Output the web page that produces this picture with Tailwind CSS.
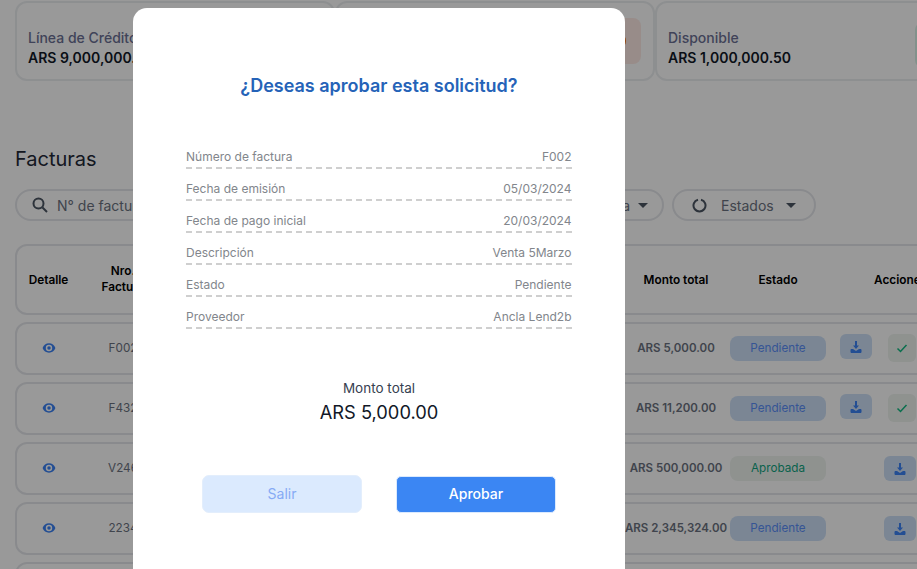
<!DOCTYPE html>
<html lang="es">
<head>
  <meta charset="UTF-8" />
  <title>Facturas</title>
  <script src="https://cdn.jsdelivr.net/npm/@tailwindcss/browser@4"></script>
</head>
<body class="h-[569px] w-[917px] overflow-hidden bg-white font-['Inter',sans-serif] text-[#1f2937]">
  <!-- Fondo: resumen y tabla -->
  <main class="w-[1000px] pl-[15px]">
    <section class="flex pt-px">
      <div class="h-[80px] w-[320px] shrink-0 rounded-[12px] border-2 border-[#eceef1] pl-[11px] pt-[25px]">
        <p class="text-[14px] font-medium leading-[20px] text-[#6b7094]">Línea de Crédito</p>
        <p class="text-[14px] font-semibold leading-[20px] text-[#111827]">ARS 9,000,000.50</p>
      </div>
      <div class="flex h-[80px] w-[320px] shrink-0 items-center justify-end rounded-[12px] border-2 border-[#eceef1] pr-[12px]">
        <div class="flex h-[46px] w-[46px] items-center justify-center rounded-[8px] bg-[#fdeae5]">
          <span class="h-[16px] w-[16px] rounded-full bg-[#f97316]"></span>
        </div>
      </div>
      <div class="flex h-[80px] w-[320px] shrink-0 justify-between rounded-[12px] border-2 border-[#eceef1] pl-[11px] pr-[12px] pt-[25px]">
        <div>
          <p class="text-[14px] font-medium leading-[20px] text-[#6b7094]">Disponible</p>
          <p class="text-[14px] font-semibold leading-[20px] text-[#111827]">ARS 1,000,000.50</p>
        </div>
        <div class="-mt-[6px] h-[46px] w-[46px] rounded-[8px] bg-[#d9f2e8]"></div>
      </div>
    </section>

    <h2 class="mt-[66px] text-[20px] leading-[24px] text-[#1f2937]">Facturas</h2>

    <section class="mt-[18px] flex items-center">
      <div class="flex h-[32px] w-[400px] items-center gap-[9px] rounded-full border-2 border-[#e5e7eb] pl-[15px]">
        <svg class="h-[16px] w-[16px]" viewBox="0 0 16 16" fill="none" stroke="#4b5563" stroke-width="2"><circle cx="6.5" cy="6.5" r="5"/><path d="M10.500 10.500 15 15"/></svg>
        <span class="text-[14px] text-[#6b7280]">N° de factura</span>
      </div>
      <div class="ml-[151px] flex h-[32px] w-[98px] items-center justify-end gap-[8px] rounded-full border-2 border-[#e5e7eb] pr-[14px]">
        <span class="text-[14px] text-[#6b7280]">Fecha</span>
        <span class="h-0 w-0 border-x-[5px] border-t-[5px] border-x-transparent border-t-[#4b5563]"></span>
      </div>
      <div class="ml-[8px] flex h-[32px] w-[144px] items-center rounded-full border-2 border-[#e5e7eb] pl-[18px]">
        <svg class="h-[15px] w-[15px]" viewBox="0 0 15 15" fill="none" stroke="#4b5563" stroke-width="2"><path d="M9 1.700A6 6 0 1 1 6 1.700"/></svg>
        <span class="ml-[14px] text-[14px] text-[#6b7280]">Estados</span>
        <span class="ml-[12px] h-0 w-0 border-x-[5px] border-t-[5px] border-x-transparent border-t-[#4b5563]"></span>
      </div>
    </section>

    <section class="mt-[23px] flex flex-col gap-[7px]">
      <div class="grid h-[71px] grid-cols-[63px_86px_458px_104px_100px_160px] rounded-[12px] border-2 border-[#e5e7eb] pt-[24px] text-center text-[11.8px] font-semibold leading-[16px] text-black">
        <span class="mt-[2px]">Detalle</span>
        <span class="-mt-[7px]">Nro.<br />Factura</span>
        <span></span>
        <span class="mt-[2px]">Monto total</span>
        <span class="mt-[2px]">Estado</span>
        <span class="mt-[2px] pl-[46px] text-left">Acciones</span>
      </div>

      <div class="grid h-[53px] grid-cols-[63px_86px_458px_104px_100px_160px] items-center rounded-[12px] border-2 border-[#e5e7eb] text-center text-[11.7px] text-[#6b7280]">
        <svg class="mx-auto -mt-[2px] h-[14px] w-[14px]" viewBox="0 0 24 24" fill="#3b82f6"><path d="M12 4C7 4 2.700 7.100 1 12c1.700 4.900 6 8 11 8s9.300-3.100 11-8c-1.700-4.900-6-8-11-8Zm0 13.500a5.500 5.500 0 1 1 0-11 5.500 5.500 0 0 1 0 11Zm0-8.500a3 3 0 1 0 0 6 3 3 0 0 0 0-6Z"/></svg>
        <span>F002</span>
        <span></span>
        <span class="whitespace-nowrap text-[11.5px] font-semibold">ARS 5,000.00</span>
        <span class="mx-auto flex h-[25px] w-[96px] items-center justify-center rounded-[8px] bg-[#cde0f7] text-[#5b8ef8]">Pendiente</span>
        <div class="flex h-[29px] items-start gap-[16px] pl-[12px]">
          <span class="flex h-[25px] w-[32px] items-center justify-center rounded-[6px] bg-[#cde0f7]"><svg class="h-[12px] w-[12px]" viewBox="0 0 12 12" fill="#3b82f6"><path d="M5 0h2v4.500h2L6 8 3 4.500h2Z"/><path d="M.5 9c0-.5.5-1 1-1H3l3 2 3-2h1.500c.5 0 1 .5 1 1v2c0 .5-.5 1-1 1h-9c-.5 0-1-.5-1-1Z"/></svg></span>
          <span class="flex h-[28px] w-[28px] items-center justify-center rounded-[6px] bg-[#eef3ef]"><svg class="h-[12px] w-[12px]" viewBox="0 0 12 12" fill="none" stroke="#10b981" stroke-width="1.500"><path d="M1.500 6.500 4.500 9.500 10.500 3"/></svg></span>
        </div>
      </div>

      <div class="grid h-[53px] grid-cols-[63px_86px_458px_104px_100px_160px] items-center rounded-[12px] border-2 border-[#e5e7eb] text-center text-[11.7px] text-[#6b7280]">
        <svg class="mx-auto -mt-[2px] h-[14px] w-[14px]" viewBox="0 0 24 24" fill="#3b82f6"><path d="M12 4C7 4 2.700 7.100 1 12c1.700 4.900 6 8 11 8s9.300-3.100 11-8c-1.700-4.900-6-8-11-8Zm0 13.500a5.500 5.500 0 1 1 0-11 5.500 5.500 0 0 1 0 11Zm0-8.500a3 3 0 1 0 0 6 3 3 0 0 0 0-6Z"/></svg>
        <span>F432</span>
        <span></span>
        <span class="whitespace-nowrap text-[11.5px] font-semibold">ARS 11,200.00</span>
        <span class="mx-auto flex h-[25px] w-[96px] items-center justify-center rounded-[8px] bg-[#cde0f7] text-[#5b8ef8]">Pendiente</span>
        <div class="flex h-[29px] items-start gap-[16px] pl-[12px]">
          <span class="flex h-[25px] w-[32px] items-center justify-center rounded-[6px] bg-[#cde0f7]"><svg class="h-[12px] w-[12px]" viewBox="0 0 12 12" fill="#3b82f6"><path d="M5 0h2v4.500h2L6 8 3 4.500h2Z"/><path d="M.5 9c0-.5.5-1 1-1H3l3 2 3-2h1.500c.5 0 1 .5 1 1v2c0 .5-.5 1-1 1h-9c-.5 0-1-.5-1-1Z"/></svg></span>
          <span class="flex h-[28px] w-[28px] items-center justify-center rounded-[6px] bg-[#eef3ef]"><svg class="h-[12px] w-[12px]" viewBox="0 0 12 12" fill="none" stroke="#10b981" stroke-width="1.500"><path d="M1.500 6.500 4.500 9.500 10.500 3"/></svg></span>
        </div>
      </div>

      <div class="grid h-[53px] grid-cols-[63px_86px_458px_104px_100px_160px] items-center rounded-[12px] border-2 border-[#e5e7eb] text-center text-[11.7px] text-[#6b7280]">
        <svg class="mx-auto -mt-[2px] h-[14px] w-[14px]" viewBox="0 0 24 24" fill="#3b82f6"><path d="M12 4C7 4 2.700 7.100 1 12c1.700 4.900 6 8 11 8s9.300-3.100 11-8c-1.700-4.900-6-8-11-8Zm0 13.500a5.500 5.500 0 1 1 0-11 5.500 5.500 0 0 1 0 11Zm0-8.500a3 3 0 1 0 0 6 3 3 0 0 0 0-6Z"/></svg>
        <span>V246</span>
        <span></span>
        <span class="whitespace-nowrap text-[11.5px] font-semibold">ARS 500,000.00</span>
        <span class="mx-auto flex h-[25px] w-[96px] items-center justify-center rounded-[8px] bg-[#eef3ef] text-[#10a37f]">Aprobada</span>
        <div class="flex items-center pl-[56px]">
          <span class="flex h-[25px] w-[32px] items-center justify-center rounded-[6px] bg-[#cde0f7]"><svg class="h-[12px] w-[12px]" viewBox="0 0 12 12" fill="#3b82f6"><path d="M5 0h2v4.500h2L6 8 3 4.500h2Z"/><path d="M.5 9c0-.5.5-1 1-1H3l3 2 3-2h1.500c.5 0 1 .5 1 1v2c0 .5-.5 1-1 1h-9c-.5 0-1-.5-1-1Z"/></svg></span>
        </div>
      </div>

      <div class="grid h-[53px] grid-cols-[63px_86px_458px_104px_100px_160px] items-center rounded-[12px] border-2 border-[#e5e7eb] text-center text-[11.7px] text-[#6b7280]">
        <svg class="mx-auto -mt-[2px] h-[14px] w-[14px]" viewBox="0 0 24 24" fill="#3b82f6"><path d="M12 4C7 4 2.700 7.100 1 12c1.700 4.900 6 8 11 8s9.300-3.100 11-8c-1.700-4.900-6-8-11-8Zm0 13.500a5.500 5.500 0 1 1 0-11 5.500 5.500 0 0 1 0 11Zm0-8.500a3 3 0 1 0 0 6 3 3 0 0 0 0-6Z"/></svg>
        <span>2234</span>
        <span></span>
        <span class="whitespace-nowrap text-[11.5px] font-semibold">ARS 2,345,324.00</span>
        <span class="mx-auto flex h-[25px] w-[96px] items-center justify-center rounded-[8px] bg-[#cde0f7] text-[#5b8ef8]">Pendiente</span>
        <div class="flex items-center pl-[56px]">
          <span class="flex h-[25px] w-[32px] items-center justify-center rounded-[6px] bg-[#cde0f7]"><svg class="h-[12px] w-[12px]" viewBox="0 0 12 12" fill="#3b82f6"><path d="M5 0h2v4.500h2L6 8 3 4.500h2Z"/><path d="M.5 9c0-.5.5-1 1-1H3l3 2 3-2h1.500c.5 0 1 .5 1 1v2c0 .5-.5 1-1 1h-9c-.5 0-1-.5-1-1Z"/></svg></span>
        </div>
      </div>

      <div class="h-[53px] rounded-[12px] border-2 border-[#e5e7eb]"></div>
    </section>
  </main>

  <!-- Modal de aprobación -->
  <div class="fixed inset-0 bg-black/40"></div>
  <div class="fixed left-[133px] top-[8px] h-[600px] w-[492px] rounded-[14px] bg-white pt-[65px]">
    <h3 class="text-center text-[18px] font-semibold leading-[26px] text-[#2563b8]">¿Deseas aprobar esta solicitud?</h3>

    <dl class="ml-[53px] mr-[53.5px] mt-[38px] text-[12px] leading-[20px] text-[#82868c]">
      <div class="flex h-[32px] items-end justify-between border-b-2 border-dashed border-[#cfcfcf]"><dt>Número de factura</dt><dd>F002</dd></div>
      <div class="flex h-[32px] items-end justify-between border-b-2 border-dashed border-[#cfcfcf]"><dt>Fecha de emisión</dt><dd>05/03/2024</dd></div>
      <div class="flex h-[32px] items-end justify-between border-b-2 border-dashed border-[#cfcfcf]"><dt>Fecha de pago inicial</dt><dd>20/03/2024</dd></div>
      <div class="flex h-[32px] items-end justify-between border-b-2 border-dashed border-[#cfcfcf]"><dt>Descripción</dt><dd>Venta 5Marzo</dd></div>
      <div class="flex h-[32px] items-end justify-between border-b-2 border-dashed border-[#cfcfcf]"><dt>Estado</dt><dd>Pendiente</dd></div>
      <div class="flex h-[32px] items-end justify-between border-b-2 border-dashed border-[#cfcfcf]"><dt>Proveedor</dt><dd>Ancla Lend2b</dd></div>
    </dl>

    <div class="mt-[49px] text-center">
      <p class="text-[13.5px] leading-[20px] text-[#374151]">Monto total</p>
      <p class="text-[18.3px] leading-[28px] text-[#111827]">ARS 5,000.00</p>
    </div>

    <div class="ml-[69px] mt-[49px] flex items-center gap-[34px]">
      <button class="h-[38px] w-[160px] rounded-[7px] border border-[#e3eefc] bg-[#dbeafe] pb-[2px] text-[14px] text-[#86aaf5]">Salir</button>
      <button class="h-[37px] w-[160px] rounded-[5px] border border-[#dbeafe] bg-[#3b86f3] pb-[2px] text-[14px] font-medium text-white">Aprobar</button>
    </div>
  </div>
</body>
</html>
